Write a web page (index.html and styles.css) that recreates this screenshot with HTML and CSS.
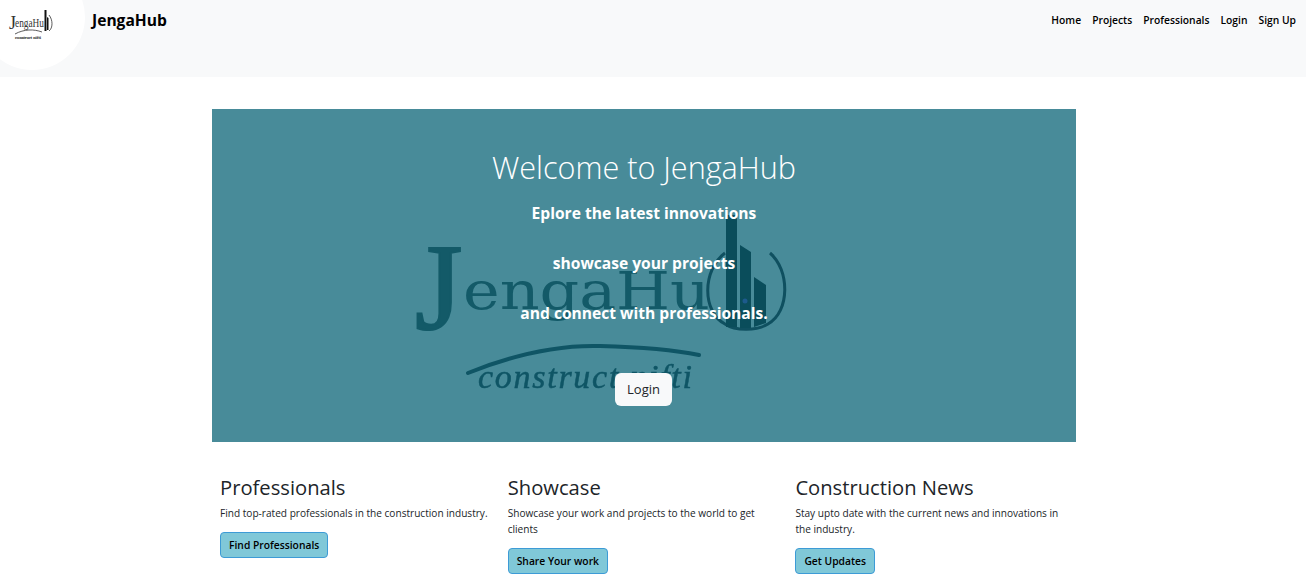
FILE: index.html
```html
<!DOCTYPE html>
<html lang="en">
<head>
<meta charset="utf-8">
<title>JengaHub</title>
<link rel="stylesheet" href="styles.css">
</head>
<body>
<header class="topbar">
  <a class="logo" href="#">
    <svg class="logo-art" viewBox="-21 -36 106 106" width="106" height="106">
      <text class="logo-j" x="9" y="29">J</text>
      <text class="logo-name" x="15" y="27" textLength="29" lengthAdjust="spacingAndGlyphs">engaHu</text>
      <path class="logo-bar" d="M44.500 10h2v21h-2zM47 17l1.500 1v12h-1.500z"/>
      <path class="logo-ring" d="M49 15C53 20 53 28 49 31"/>
      <path class="logo-arc" d="M15 34C24 29 34 29 42 32"/>
      <text class="logo-sub" x="15" y="39" textLength="26" lengthAdjust="spacingAndGlyphs">construct nifti</text>
    </svg>
  </a>
  <a class="brand" href="#">JengaHub</a>
  <nav class="links">
    <a href="#">Home</a>
    <a href="#">Projects</a>
    <a href="#">Professionals</a>
    <a href="#">Login</a>
    <a href="#">Sign Up</a>
  </nav>
</header>
<main class="page">
  <section class="hero">
    <svg class="mark" viewBox="212 109 864 333" width="864" height="333" aria-hidden="true">
      <text class="mark-j" x="415" y="329">J</text>
      <text class="mark-name" x="463" y="309" textLength="247" lengthAdjust="spacingAndGlyphs">engaHu</text>
      <path class="mark-ring" d="M725 253C702 270 702 312 725 324C735 331 757 331 768 324C790 312 790 270 770 253"/>
      <path class="mark-tower" d="M726 215h11v112h-11zM740 245l11 7v76h-11zM754 277l12 8v38l-12 4z"/>
      <circle class="mark-dot" cx="745" cy="301" r="2.500"/>
      <path class="mark-arc" d="M468 373C520 352 565 345 600 346C640 347 675 350 699 355"/>
      <text class="mark-sub" x="478" y="388" textLength="214" lengthAdjust="spacing">construct nifti</text>
    </svg>
    <div class="hero-copy">
      <h1>Welcome to JengaHub</h1>
      <p>Eplore the latest innovations</p>
      <p>showcase your projects</p>
      <p>and connect with professionals.</p>
      <a class="hero-btn" href="#">Login</a>
    </div>
  </section>
  <section class="cards">
    <article class="card">
      <h2>Professionals</h2>
      <p>Find top-rated professionals in the construction industry.</p>
      <a class="card-btn" href="#">Find Professionals</a>
    </article>
    <article class="card">
      <h2>Showcase</h2>
      <p>Showcase your work and projects to the world to get clients</p>
      <a class="card-btn" href="#">Share Your work</a>
    </article>
    <article class="card">
      <h2>Construction News</h2>
      <p>Stay upto date with the current news and innovations in the industry.</p>
      <a class="card-btn" href="#">Get Updates</a>
    </article>
  </section>
</main>
</body>
</html>
```
FILE: styles.css
```css
* { box-sizing: border-box; }
html, body { height: 100%; }
body {
  margin: 0;
  overflow: hidden;
  background: #fff;
  color: #212529;
  font-family: "Open Sans", "Noto Sans", sans-serif;
}
a { text-decoration: none; color: inherit; }

.topbar {
  display: flex;
  align-items: flex-start;
  height: 77px;
  padding-right: 10px;
  background: #f8f9fa;
  overflow: hidden;
}
.logo {
  flex: none;
  width: 106px;
  height: 106px;
  margin: -36px 7px 0 -21px;
  border-radius: 50%;
  background: #fff;
}
.logo-art { display: block; }
.logo-j { font: 18px "Liberation Serif", serif; fill: #333; }
.logo-name { font: 12px "Liberation Serif", serif; fill: #333; }
.logo-bar { fill: #111; }
.logo-ring, .logo-arc { fill: none; stroke: #333; stroke-width: .8; }
.logo-sub { font: 5px "Liberation Serif", serif; fill: #222; stroke: #222; stroke-width: .15; }
.brand {
  margin-top: 10px;
  font-size: 15.600px;
  line-height: 20px;
  font-weight: 700;
  color: #000;
}
.links {
  display: flex;
  gap: 11px;
  margin-left: auto;
  margin-top: 13px;
  font-size: 10.300px;
  line-height: 15px;
  font-weight: 600;
  color: #000;
}

.page { width: 864px; margin: 32px 0 0 212px; }
.hero {
  position: relative;
  height: 333px;
  background: #488b99;
  overflow: hidden;
}
.mark { position: absolute; inset: 0; filter: blur(.5px); }
.mark-j { font: 122px "Liberation Serif", serif; fill: #135a68; stroke: #135a68; stroke-width: 2; }
.mark-name { font: 52px "DejaVu Serif", serif; fill: #135a68; }
.mark-ring { fill: none; stroke: #0f5060; stroke-width: 3; }
.mark-tower { fill: #0a4d5b; }
.mark-dot { fill: #1d5a8c; }
.mark-arc { fill: none; stroke: #0f5565; stroke-width: 4; stroke-linecap: round; }
.mark-sub { font: italic 34px "Liberation Serif", serif; fill: #0f5565; stroke: #0f5565; stroke-width: .5; }
.hero-copy {
  position: relative;
  display: flex;
  flex-direction: column;
  align-items: center;
  padding-top: 36px;
  color: #fff;
}
.hero-copy h1 {
  margin: 0 0 12px;
  font-size: 30.600px;
  line-height: 44px;
  font-weight: 300;
}
.hero-copy p {
  margin: 0 0 26px;
  font-size: 15.600px;
  line-height: 24px;
  font-weight: 700;
}
.hero-btn {
  margin: 22px 1px 0 0;
  width: 57px;
  height: 33px;
  border-radius: 6px;
  background: #f8f9fa;
  color: #212529;
  font-size: 13px;
  line-height: 33px;
  text-align: center;
}

.cards {
  display: grid;
  grid-template-columns: repeat(3, 287.700px);
  margin-top: 31px;
}
.card { padding: 0 4px 0 8px; }
.card h2 {
  margin: 0 0 4px;
  font-size: 20.200px;
  line-height: 28px;
  font-weight: 500;
}
.card p {
  margin: 0 0 11px;
  font-size: 10.100px;
  line-height: 16px;
}
.card-btn {
  display: inline-block;
  height: 26px;
  padding: 0 8px;
  border: 1px solid #3d9bd6;
  border-radius: 4px;
  background: #80c8d8;
  color: #000;
  font-size: 10.300px;
  line-height: 24px;
  font-weight: 600;
}
```
